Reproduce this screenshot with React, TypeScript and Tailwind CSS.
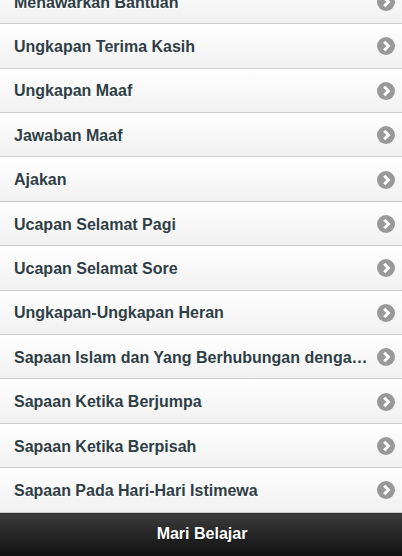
const items = [
  "Menawarkan Bantuan",
  "Ungkapan Terima Kasih",
  "Ungkapan Maaf",
  "Jawaban Maaf",
  "Ajakan",
  "Ucapan Selamat Pagi",
  "Ucapan Selamat Sore",
  "Ungkapan-Ungkapan Heran",
  "Sapaan Islam dan Yang Berhubungan dengan Islam",
  "Sapaan Ketika Berjumpa",
  "Sapaan Ketika Berpisah",
  "Sapaan Pada Hari-Hari Istimewa",
]

function Arrow() {
  return (
    <svg width="18" height="18" viewBox="0 0 18 18" className="shrink-0">
      <circle cx="9" cy="9" r="9" fill="#999" />
      <path d="M7.2 4.8 11.4 9l-4.2 4.2" fill="none" stroke="#fff" strokeWidth="3" />
    </svg>
  )
}

export default function App() {
  return (
    <div className="flex h-[556px] w-[402px] flex-col overflow-hidden bg-white font-['Liberation_Sans',Arial,sans-serif]">
      <div className="min-h-0 flex-1 overflow-hidden">
        <ul className="mt-[-20.2px]">
          {items.map((item) => (
            <li
              key={item}
              className="flex h-[44.4px] items-center gap-2 border-b border-[#ccc] bg-gradient-to-b from-white to-[#f1f1f1] pl-[14px] pr-[7px] pt-[1px]"
            >
              <span className="min-w-0 flex-1 truncate pt-[1.4px] text-base font-bold text-[#2f3e46] [text-shadow:0_1px_0_#fff]">
                {item}
              </span>
              <Arrow />
            </li>
          ))}
        </ul>
      </div>
      <div className="flex h-[43px] shrink-0 items-center justify-center border-t border-[#333] bg-gradient-to-b from-[#3c3c3c] to-[#111] pb-[3px] pl-[2px] text-base font-bold text-white [text-shadow:0_1px_1px_#111]">
        Mari Belajar
      </div>
    </div>
  )
}
